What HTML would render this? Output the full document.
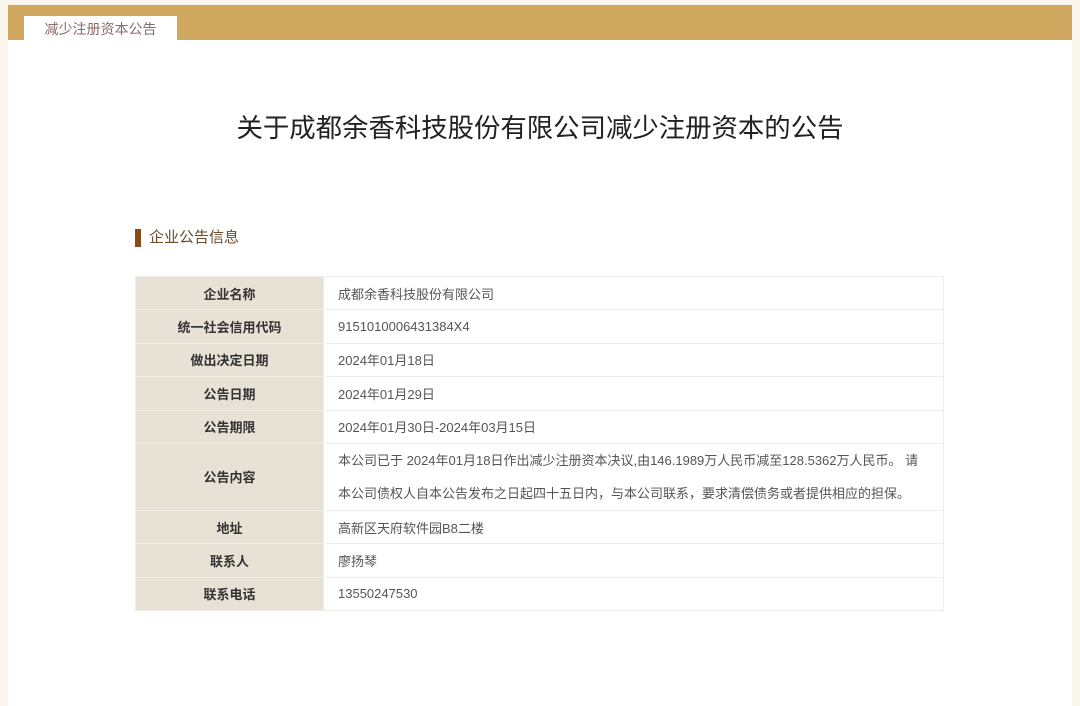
<!DOCTYPE html>
<html><head><meta charset="utf-8"><style>
*{margin:0;padding:0;box-sizing:border-box}
body{width:1080px;height:706px;background:#faf6ee;font-family:"Liberation Sans","Noto Sans CJK SC",sans-serif;overflow:hidden;position:relative}
.main{position:absolute;left:8px;top:5px;width:1064px;height:701px;background:#fff}
.band{position:absolute;left:0;top:0;width:1064px;height:35px;background:#d1a860}
.tab{position:absolute;left:16px;top:11px;width:153px;height:24px;background:#fff;color:#8a6a6a;font-size:14px;line-height:26px;text-align:center}
h1{position:absolute;left:0;width:1064px;top:101px;text-align:center;font-size:26.4px;font-weight:normal;color:#222}
.sec{position:absolute;left:127px;top:224px;font-size:15px;color:#6b4a2a;padding-left:14px;line-height:18px}
.sec:before{content:"";position:absolute;left:0;top:0;width:6px;height:18px;background:#8b4a12}
table{position:absolute;left:127px;top:271px;width:809px;border-collapse:collapse;font-size:13px}
td{border:1px solid #f0ede8;height:33.4px;color:#555}
td.l{width:188px;background:#e8e1d6;text-align:center;font-weight:bold;color:#333}
td.v{padding-left:14px}
td.c{line-height:33px}
</style></head><body>
<div class="main">
<div class="band"><div class="tab">减少注册资本公告</div></div>
<h1>关于成都余香科技股份有限公司减少注册资本的公告</h1>
<div class="sec">企业公告信息</div>
<table>
<tr><td class="l">企业名称</td><td class="v">成都余香科技股份有限公司</td></tr>
<tr><td class="l">统一社会信用代码</td><td class="v">9151010006431384X4</td></tr>
<tr><td class="l">做出决定日期</td><td class="v">2024年01月18日</td></tr>
<tr><td class="l">公告日期</td><td class="v">2024年01月29日</td></tr>
<tr><td class="l">公告期限</td><td class="v">2024年01月30日-2024年03月15日</td></tr>
<tr><td class="l" style="height:66px">公告内容</td><td class="v c">本公司已于 2024年01月18日作出减少注册资本决议,由146.1989万人民币减至128.5362万人民币。 请<br>本公司债权人自本公告发布之日起四十五日内，与本公司联系，要求清偿债务或者提供相应的担保。</td></tr>
<tr><td class="l">地址</td><td class="v">高新区天府软件园B8二楼</td></tr>
<tr><td class="l">联系人</td><td class="v">廖扬琴</td></tr>
<tr><td class="l">联系电话</td><td class="v">13550247530</td></tr>
</table>
</div>
</body></html>
